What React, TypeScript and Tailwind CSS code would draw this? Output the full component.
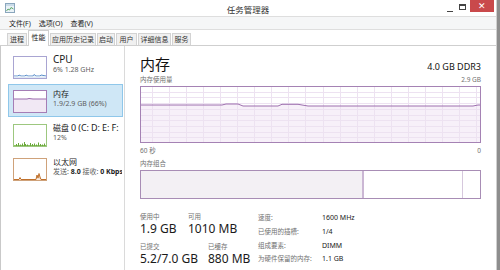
import React from "react";

const GW = 341;
const GH = 57;
const vLines = Array.from({ length: 20 }, (_, k) => Math.round(12 + 17.05 * k) + 0.5).filter((x) => x < GW - 1);
const hLines = Array.from({ length: 9 }, (_, k) => Math.round(5.7 * (k + 1)) + 0.5);
const linePts = "0,19 82,19 86,18 98,18 103,20 138,20 142,18.3 158,18.3 168,20 333,20 338,19 341,19";

function MemGraph() {
  return (
    <svg width={GW} height={GH} className="block">
      <rect x="0" y="0" width={GW} height={GH} fill="#ffffff" />
      <polygon points={`${linePts} 341,57 0,57`} fill="#f7f0f9" />
      {vLines.map((x) => (
        <line key={"v" + x} x1={x} y1={0} x2={x} y2={GH} stroke="#ede2f1" strokeWidth="1" />
      ))}
      {hLines.map((y) => (
        <line key={"h" + y} x1={0} y1={y} x2={GW} y2={y} stroke="#ede2f1" strokeWidth="1" />
      ))}
      <polyline points={linePts} fill="none" stroke="#9d6fae" strokeWidth="1" />
      <rect x="0.5" y="0.5" width={GW - 1} height={GH - 1} fill="none" stroke="#a582b4" strokeWidth="1" />
    </svg>
  );
}

function Thumb({ kind }: { kind: "cpu" | "mem" | "disk" | "net" }) {
  if (kind === "cpu") {
    return (
      <svg width="34" height="23" className="block">
        <rect x="0.5" y="0.5" width="33" height="22" fill="#ffffff" stroke="#a9a5d2" />
        <polyline points="1,20 5,20 6,19 8,20 12,20 13,19 15,20 20,20 21,18.5 23,20 27,20 28,19 33,20" fill="none" stroke="#5b8fca" strokeWidth="1" />
        <rect x="1" y="20.5" width="32" height="1.5" fill="#dfe9f5" />
      </svg>
    );
  }
  if (kind === "mem") {
    return (
      <svg width="34" height="23" className="block">
        <rect x="0.5" y="0.5" width="33" height="22" fill="#ffffff" stroke="#a57db5" />
        <polygon points="1,9 14,9 16,8.5 20,9 33,9 33,22 1,22" fill="#f1e8f4" />
        <polyline points="1,9 14,9 16,8.5 20,9 33,9" fill="none" stroke="#9b6aad" strokeWidth="1" />
      </svg>
    );
  }
  if (kind === "disk") {
    const spikes = [3, 5, 7, 9, 11, 12, 14, 17, 19, 21, 23, 25, 27, 29, 31];
    const hs = [2, 3, 1.5, 2.5, 4, 2, 1.5, 3, 2, 2.5, 1.5, 3.5, 2, 1.5, 2.5];
    return (
      <svg width="34" height="23" className="block">
        <rect x="0.5" y="0.5" width="33" height="22" fill="#ffffff" stroke="#9dc77f" />
        <line x1="1" y1="21.5" x2="33" y2="21.5" stroke="#8cc063" />
        {spikes.map((x, i) => (
          <line key={x} x1={x + 0.5} y1={22} x2={x + 0.5} y2={22 - hs[i]} stroke="#6aa83a" strokeWidth="1" />
        ))}
      </svg>
    );
  }
  return (
    <svg width="34" height="23" className="block">
      <rect x="0.5" y="0.5" width="33" height="22" fill="#ffffff" stroke="#cfa27a" />
      <polyline points="1,21.5 6,21.5 7,19.5 8,21.5 23,21.5 24,17 25,20 26,15.5 27,19 28,21.5 33,21.5" fill="#f3d9c3" stroke="#c0712c" strokeWidth="1" />
    </svg>
  );
}

function SideItem({
  selected,
  kind,
  title,
  sub,
}: {
  selected?: boolean;
  kind: "cpu" | "mem" | "disk" | "net";
  title: React.ReactNode;
  sub: React.ReactNode;
}) {
  return (
    <div
      className={
        selected
          ? "flex h-[33px] w-[115px] ml-[7px] items-start border border-[#8fc7ea] bg-[#cfe7f6] overflow-hidden"
          : "flex h-[33px] w-[115px] ml-[7px] items-start border border-transparent overflow-hidden"
      }
    >
      <div className="ml-[4px] mt-[5px] shrink-0">
        <Thumb kind={kind} />
      </div>
      <div className="ml-[6px] pt-[3px] min-w-0 whitespace-nowrap">
        <div className="h-[11px] leading-[11px] text-[10px] text-[#1a1a1a]">{title}</div>
        <div className="h-[9px] leading-[9px] text-[7px] text-[#5e5e5e]">{sub}</div>
      </div>
    </div>
  );
}

function Tab({ label, w, selected }: { label: string; w: string; selected?: boolean }) {
  return (
    <div
      className={
        selected
          ? `${w} h-[16px] mb-[-1px] bg-white border border-b-0 border-[#cfcfcf] text-[7px] leading-[14px] text-center text-[#222]`
          : `${w} h-[12px] bg-[#f0f0f0] border border-b-0 border-[#d3d3d3] text-[7px] leading-[11px] text-center text-[#333]`
      }
    >
      {label}
    </div>
  );
}

export default function App() {
  return (
    <div className="w-[500px] h-[270px] overflow-hidden flex bg-white font-['Noto_Sans','Noto_Sans_CJK_SC',sans-serif]">
      <div className="w-[496px] h-full flex flex-col">
        {/* Title bar */}
        <div className="h-[16px] shrink-0 grid grid-cols-[1fr_auto_1fr] items-start bg-white">
          <div className="pl-[5px] pt-[3px]">
            <svg width="10" height="10" className="block">
              <rect x="0.5" y="0.5" width="9" height="9" fill="#eaf2f7" stroke="#8aa6bd" />
              <rect x="1" y="1" width="8" height="2" fill="#c9dbe8" />
              <polyline points="1.5,8 3,6 4.5,7 6,4.5 8.5,6" fill="none" stroke="#5fa86a" strokeWidth="1" />
            </svg>
          </div>
          <div className="text-[8.5px] leading-[16px] pt-[2px] text-[#333]">任务管理器</div>
          <div className="flex justify-end items-start">
            <div className="w-[12px] h-[13px] flex items-end justify-center pb-[1px]">
              <div className="w-[6px] h-[1.5px] bg-[#444]" />
            </div>
            <div className="w-[12px] h-[13px] flex justify-center pt-[4px]">
              <div className="w-[7px] h-[6px] border border-t-2 border-[#444]" />
            </div>
            <div className="ml-[2px] mr-[2px] w-[24px] h-[12px] bg-[#c9494b] flex items-center justify-center text-white text-[9px] leading-[12px]">
              ✕
            </div>
          </div>
        </div>
        {/* Menu bar */}
        <div className="h-[14px] shrink-0 border-t border-b border-[#dedede] bg-[#f5f6f7] flex gap-[8px] pl-[9px] text-[7px] leading-[13px] text-[#222]">
          <span>文件(F)</span>
          <span>选项(O)</span>
          <span>查看(V)</span>
        </div>
        {/* Tabs */}
        <div className="h-[16px] shrink-0 flex items-end gap-[1px] pl-[7px] border-b border-[#cfcfcf] bg-white">
          <Tab label="进程" w="w-[20px]" />
          <Tab label="性能" w="w-[21px]" selected />
          <Tab label="应用历史记录" w="w-[46px]" />
          <Tab label="启动" w="w-[18px]" />
          <Tab label="用户" w="w-[21px]" />
          <Tab label="详细信息" w="w-[33px]" />
          <Tab label="服务" w="w-[19px]" />
        </div>
        {/* Body */}
        <div className="flex-1 flex min-h-0 border-l border-[#c9c9c9]">
          {/* Left panel */}
          <div className="w-[124px] shrink-0 border-r border-[#dadada] pt-[4px] flex flex-col gap-[1px]">
            <SideItem kind="cpu" title="CPU" sub="6% 1.28 GHz" />
            <SideItem
              selected
              kind="mem"
              title={<span className="text-[8px]">内存</span>}
              sub="1.9/2.9 GB (66%)"
            />
            <SideItem
              kind="disk"
              title={
                <span className="text-[9px] tracking-[-0.1px]">
                  <span className="text-[8px]">磁盘</span> 0 (C: D: E: F:
                </span>
              }
              sub="12%"
            />
            <SideItem
              kind="net"
              title={<span className="text-[8px]">以太网</span>}
              sub={
                <>
                  发送: <b className="font-bold text-[#222]">8.0</b> 接收: <b className="font-bold text-[#222]">0 Kbps</b>
                </>
              }
            />
          </div>
          {/* Right content */}
          <div className="flex-1 min-w-0 pl-[15px] pr-[15px] pt-[9px] flex flex-col">
            <div className="h-[18px] flex items-baseline justify-between">
              <span className="text-[15px] leading-[18px] text-[#111]">内存</span>
              <span className="text-[9px] leading-[18px] text-[#111]">4.0 GB DDR3</span>
            </div>
            <div className="mt-[3px] h-[8px] flex justify-between text-[6.5px] leading-[8px] text-[#707070]">
              <span>内存使用量</span>
              <span>2.9 GB</span>
            </div>
            <div className="mt-[2px]">
              <MemGraph />
            </div>
            <div className="mt-[4px] h-[8px] flex justify-between text-[6.5px] leading-[8px] text-[#707070]">
              <span>60 秒</span>
              <span>0</span>
            </div>
            <div className="mt-[5px] h-[8px] text-[6.5px] leading-[8px] text-[#707070]">内存组合</div>
            <div className="mt-[2px] h-[29px] flex border border-[#a88db5]">
              <div className="w-[223px] bg-[#f3f0f4] border-r-2 border-[#cbb7d4]" />
              <div className="w-[99px] bg-white border-r border-[#d6c8dd]" />
              <div className="flex-1 bg-white" />
            </div>
            <div className="mt-[13px] flex">
              <div className="w-[118px] shrink-0">
                <div className="flex">
                  <div className="w-[48px]">
                    <div className="h-[9px] text-[6.5px] leading-[9px] text-[#707070]">使用中</div>
                    <div className="h-[16px] text-[12px] leading-[16px] text-[#1a1a1a] whitespace-nowrap">1.9 GB</div>
                  </div>
                  <div>
                    <div className="h-[9px] text-[6.5px] leading-[9px] text-[#707070]">可用</div>
                    <div className="h-[16px] text-[12px] leading-[16px] text-[#1a1a1a] whitespace-nowrap">1010 MB</div>
                  </div>
                </div>
                <div className="flex mt-[5px]">
                  <div className="w-[68px]">
                    <div className="h-[9px] text-[6.5px] leading-[9px] text-[#707070]">已提交</div>
                    <div className="h-[16px] text-[12px] leading-[16px] text-[#1a1a1a] whitespace-nowrap">5.2/7.0 GB</div>
                  </div>
                  <div>
                    <div className="h-[9px] text-[6.5px] leading-[9px] text-[#707070]">已缓存</div>
                    <div className="h-[16px] text-[12px] leading-[16px] text-[#1a1a1a] whitespace-nowrap">880 MB</div>
                  </div>
                </div>
              </div>
              <div className="grid grid-cols-[64px_auto] leading-[11px] whitespace-nowrap">
                <span className="text-[6.5px] text-[#707070]">速度:</span>
                <span className="text-[7px] text-[#1a1a1a]">1600 MHz</span>
                <span className="text-[6.5px] text-[#707070]">已使用的插槽:</span>
                <span className="text-[7px] text-[#1a1a1a]">1/4</span>
                <span className="text-[6.5px] text-[#707070]">组成要素:</span>
                <span className="text-[7px] text-[#1a1a1a]">DIMM</span>
                <span className="text-[6.5px] text-[#707070]">为硬件保留的内存:</span>
                <span className="text-[7px] text-[#1a1a1a]">1.1 GB</span>
              </div>
            </div>
          </div>
        </div>
      </div>
      <div className="w-[4px] h-full border-l border-[#d0d0d0] bg-[#8e8e8e]" />
    </div>
  );
}
